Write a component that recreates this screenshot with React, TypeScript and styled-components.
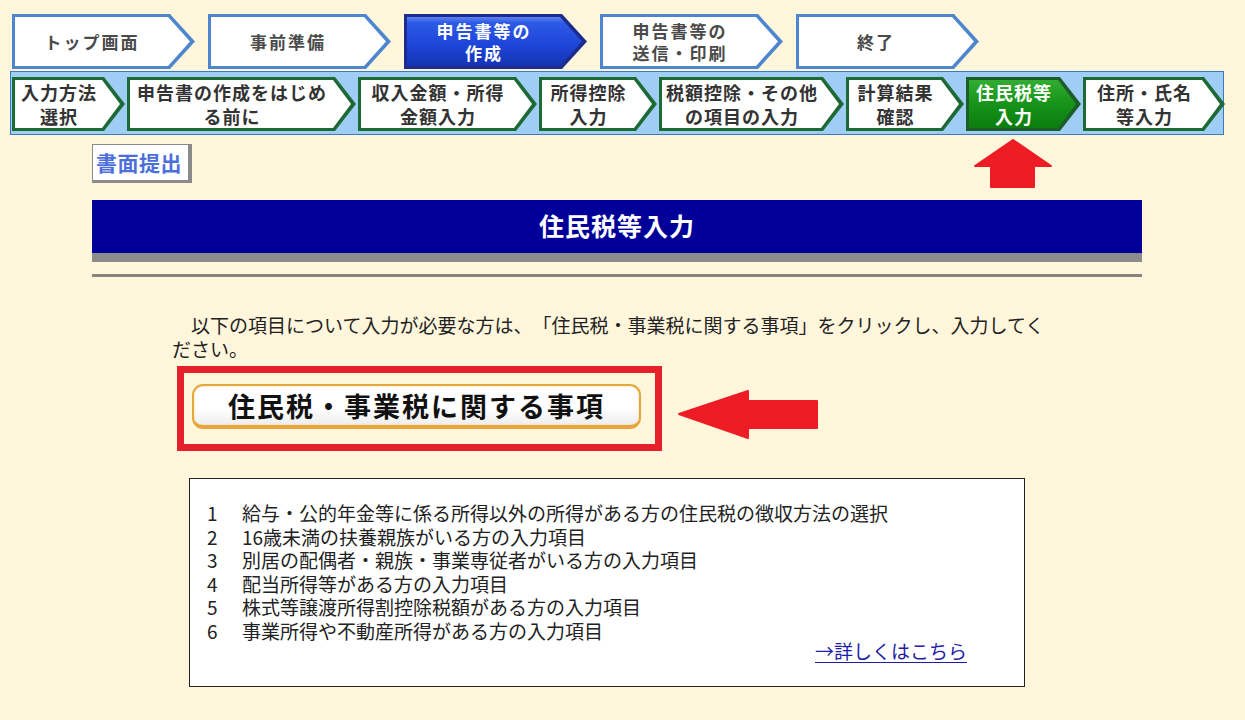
import React from "react";
import styled, { createGlobalStyle } from "styled-components";

const GlobalStyle = createGlobalStyle`
  html, body {
    margin: 0;
    padding: 0;
    background: #fff6dc;
  }
  body {
    font-family: "Noto Sans CJK JP", "Noto Sans", sans-serif;
    color: #222;
    text-spacing-trim: space-all;
  }
`;

const Page = styled.div`
  width: 1245px;
  min-height: 720px;
  padding-top: 14px;
  box-sizing: border-box;
`;

/* ---------- top navigation ---------- */
const MainSteps = styled.div`
  display: flex;
  gap: 13px;
  padding-left: 12px;
`;

type ShapeProps = { $w: number; $h: number; $tip: number; $edge: string };

const StepShape = styled.div<ShapeProps>`
  width: ${(p) => p.$w}px;
  height: ${(p) => p.$h}px;
  flex: none;
  box-sizing: border-box;
  padding: 3px 5px 3px 3px;
  display: flex;
  background: ${(p) => p.$edge};
  clip-path: polygon(
    0 0,
    calc(100% - ${(p) => p.$tip}px) 0,
    100% 50%,
    calc(100% - ${(p) => p.$tip}px) 100%,
    0 100%
  );
`;

type FillProps = { $tip: number; $fill: string; $color: string; $size: number; $ls: number; $lh: number };

const StepFill = styled.div<FillProps>`
  flex: 1;
  display: flex;
  flex-direction: column;
  align-items: center;
  justify-content: center;
  padding-right: ${(p) => p.$tip - 4}px;
  background: ${(p) => p.$fill};
  color: ${(p) => p.$color};
  font-weight: 700;
  font-size: ${(p) => p.$size}px;
  letter-spacing: ${(p) => p.$ls}px;
  line-height: ${(p) => p.$lh}px;
  text-align: center;
  white-space: nowrap;
  clip-path: polygon(
    0 0,
    calc(100% - ${(p) => p.$tip - 3}px) 0,
    100% 50%,
    calc(100% - ${(p) => p.$tip - 3}px) 100%,
    0 100%
  );
`;

const SubBand = styled.div`
  margin: 2px 0 0 10px;
  width: 1214px;
  box-sizing: border-box;
  background: #9fcdf6;
  border: 1px solid #3b7bbd;
  padding: 5px 2px 3px 1px;
  display: flex;
  gap: 2px;
`;

/* ---------- content ---------- */
const Content = styled.div`
  margin-left: 92px;
  width: 1050px;
`;

const ToolRow = styled.div`
  display: flex;
  align-items: flex-start;
  margin-top: 4px;
  height: 49px;
`;

const PaperButton = styled.div`
  margin-top: 5px;
  width: 100px;
  height: 39px;
  box-sizing: border-box;
  background: #fff;
  border-top: 1px solid #8a8a8a;
  border-left: 1px solid #8a8a8a;
  border-right: 4px solid #8a8a8a;
  border-bottom: 3px solid #8a8a8a;
  color: #4d6fdc;
  font-weight: 700;
  font-size: 21px;
  line-height: 34px;
  padding-left: 3px;
  letter-spacing: 0.5px;
`;

const UpArrow = styled.svg`
  margin-left: 781px;
  flex: none;
`;

const TitleBar = styled.div`
  margin-top: 12px;
  height: 53px;
  background: #000099;
  color: #fff;
  font-weight: 700;
  font-size: 25px;
  line-height: 50px;
  text-align: center;
  letter-spacing: 1px;
  border-bottom: 9px solid #8c8c8c;
`;

const Rule = styled.div`
  margin-top: 12px;
  height: 3px;
  background: #8a847f;
`;

const Lead = styled.p`
  margin: 36px 0 0 80px;
  width: 890px;
  font-size: 19px;
  line-height: 24px;
  color: #222;
`;

const ActionRow = styled.div`
  display: flex;
  align-items: center;
  margin: 5px 0 0 85px;
`;

const Highlight = styled.div`
  width: 485px;
  height: 85px;
  box-sizing: border-box;
  border: 7px solid #e5202a;
  padding: 11px 0 0 8px;
`;

const ItemButton = styled.div`
  width: 449px;
  height: 45px;
  box-sizing: border-box;
  border-radius: 11px;
  border: 2px solid #e6a63a;
  border-bottom-width: 4px;
  background: linear-gradient(#ffffff 0%, #ffffff 55%, #eeeeee 100%);
  box-shadow: inset 0 0 2px #f2d08a;
  display: flex;
  align-items: center;
  justify-content: center;
  font-weight: 700;
  font-size: 27px;
  letter-spacing: 2px;
  color: #111;
`;

const LeftArrow = styled.svg`
  margin: 12px 0 0 16px;
  flex: none;
`;

const ListBox = styled.div`
  margin: 27px 0 0 97px;
  width: 836px;
  height: 209px;
  box-sizing: border-box;
  background: #fff;
  border: 1px solid #222;
  padding: 22px 0 0 17px;
  font-size: 19px;
  line-height: 23.6px;
  color: #222;
`;

const ListRow = styled.div`
  display: flex;
`;

const ListNo = styled.span`
  width: 35px;
  flex: none;
`;

const MoreRow = styled.div`
  display: flex;
  justify-content: flex-end;
  padding-right: 57px;
  margin-top: -4px;
`;

const MoreLink = styled.a`
  color: #1d1da8;
  text-decoration: underline;
  text-underline-offset: 3px;
  cursor: pointer;
`;

/* ---------- data ---------- */
type Step = { lines: string[]; active?: boolean };

const mainSteps: Step[] = [
  { lines: ["トップ画面"] },
  { lines: ["事前準備"] },
  { lines: ["申告書等の", "作成"], active: true },
  { lines: ["申告書等の", "送信・印刷"] },
  { lines: ["終了"] },
];

const subSteps: (Step & { w: number })[] = [
  { lines: ["入力方法", "選択"], w: 113 },
  { lines: ["申告書の作成をはじめ", "る前に"], w: 229 },
  { lines: ["収入金額・所得", "金額入力"], w: 179 },
  { lines: ["所得控除", "入力"], w: 118 },
  { lines: ["税額控除・その他", "の項目の入力"], w: 185 },
  { lines: ["計算結果", "確認"], w: 118 },
  { lines: ["住民税等", "入力"], w: 115, active: true },
  { lines: ["住所・氏名", "等入力"], w: 142 },
];

const items = [
  "給与・公的年金等に係る所得以外の所得がある方の住民税の徴収方法の選択",
  "16歳未満の扶養親族がいる方の入力項目",
  "別居の配偶者・親族・事業専従者がいる方の入力項目",
  "配当所得等がある方の入力項目",
  "株式等譲渡所得割控除税額がある方の入力項目",
  "事業所得や不動産所得がある方の入力項目",
];

const IDEO_SPACE = "\u3000";

export default function App() {
  return (
    <Page>
      <GlobalStyle />
      <MainSteps>
        {mainSteps.map((s, i) => (
          <StepShape key={i} $w={183} $h={55} $tip={25} $edge={s.active ? "#1b2c8c" : "#4d86cf"}>
            <StepFill
              $tip={25}
              $fill={
                s.active
                  ? "linear-gradient(#5d82f0 0%, #2d5ae6 12%, #1e46d8 55%, #1534b4 100%)"
                  : "#ffffff"
              }
              $color={s.active ? "#ffffff" : "#4a4a4a"}
              $size={17}
              $ls={2}
              $lh={22}
            >
              {s.lines.map((l) => (
                <span key={l}>{l}</span>
              ))}
            </StepFill>
          </StepShape>
        ))}
      </MainSteps>

      <SubBand>
        {subSteps.map((s, i) => (
          <StepShape key={i} $w={s.w} $h={54} $tip={21} $edge={s.active ? "#1c5e28" : "#1d6a34"}>
            <StepFill
              $tip={21}
              $fill={s.active ? "linear-gradient(#33ac33 0%, #17931a 50%, #0b7d0e 100%)" : "#ffffff"}
              $color={s.active ? "#ffffff" : "#333333"}
              $size={18}
              $ls={1}
              $lh={24}
            >
              {s.lines.map((l) => (
                <span key={l}>{l}</span>
              ))}
            </StepFill>
          </StepShape>
        ))}
      </SubBand>

      <Content>
        <ToolRow>
          <PaperButton>書面提出</PaperButton>
          <UpArrow width="80" height="50" viewBox="0 0 80 50">
            <polygon
              points="40,1 78,27 61,27 61,48 18,48 18,27 2,27"
              fill="#ee1c24"
              stroke="#ee1c24"
              strokeWidth="2"
              strokeLinejoin="round"
            />
          </UpArrow>
        </ToolRow>

        <TitleBar>住民税等入力</TitleBar>
        <Rule />

        <Lead>
          {IDEO_SPACE}
          以下の項目について入力が必要な方は、「住民税・事業税に関する事項」をクリックし、入力してください。
        </Lead>

        <ActionRow>
          <Highlight>
            <ItemButton>住民税・事業税に関する事項</ItemButton>
          </Highlight>
          <LeftArrow width="141" height="50" viewBox="0 0 141 50">
            <polygon
              points="1,24 70,1 70,11 139,11 139,38 70,38 70,48"
              fill="#ee1c24"
              stroke="#ee1c24"
              strokeWidth="2"
              strokeLinejoin="round"
            />
          </LeftArrow>
        </ActionRow>

        <ListBox>
          {items.map((t, i) => (
            <ListRow key={i}>
              <ListNo>{i + 1}</ListNo>
              <span>{t}</span>
            </ListRow>
          ))}
          <MoreRow>
            <MoreLink>→詳しくはこちら</MoreLink>
          </MoreRow>
        </ListBox>
      </Content>
    </Page>
  );
}
